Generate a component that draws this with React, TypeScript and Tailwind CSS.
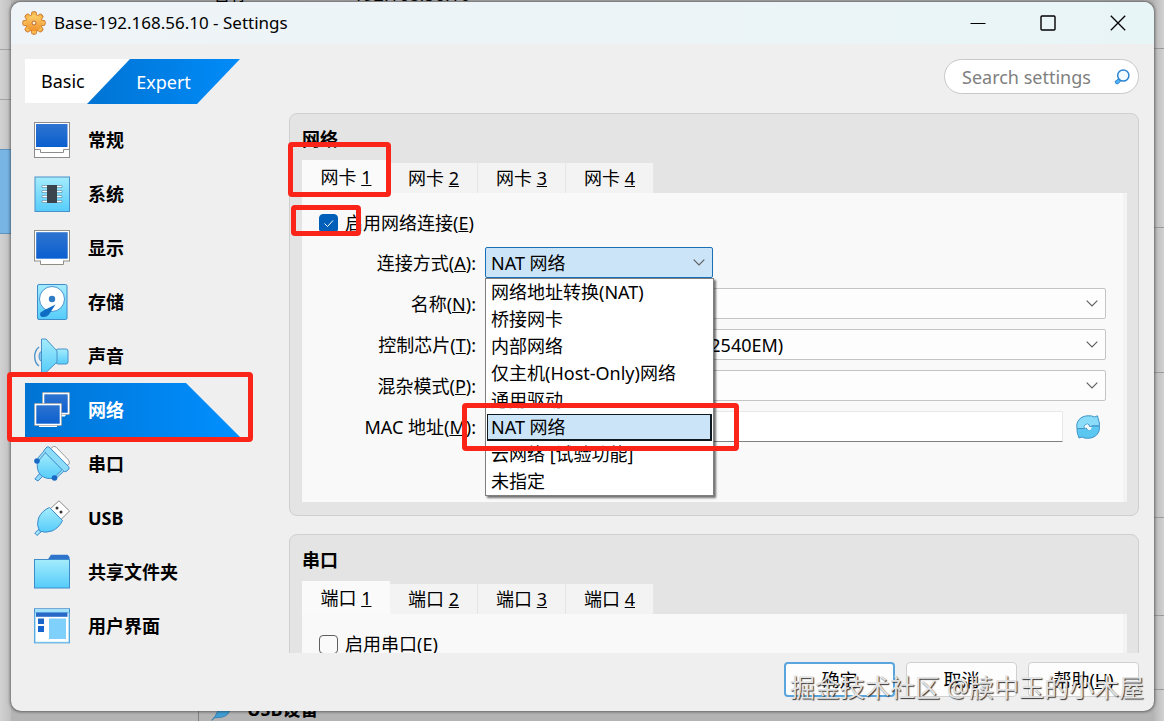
import { useState, type ReactNode } from "react";

function GearIcon() {
  const angles = [0, 45, 90, 135];
  return (
    <svg viewBox="0 0 24 24" className="size-6" aria-hidden="true">
      <defs>
        <linearGradient id="gear" x1="0" y1="0" x2="0" y2="1">
          <stop offset="0" stopColor="#fbd06a" />
          <stop offset="1" stopColor="#f0912c" />
        </linearGradient>
      </defs>
      <g fill="#c8722a" stroke="#c8722a" strokeWidth="1.4" strokeLinejoin="round">
        {angles.map((a) => (
          <rect key={a} x="9.8" y="1" width="4.4" height="22" rx="1.4" transform={`rotate(${a} 12 12)`} />
        ))}
        <circle cx="12" cy="12" r="8" />
      </g>
      <g fill="url(#gear)">
        {angles.map((a) => (
          <rect key={a} x="9.8" y="1.2" width="4.4" height="21.6" rx="1.4" fill="#f8b94f" transform={`rotate(${a} 12 12)`} />
        ))}
        <circle cx="12" cy="12" r="8" />
      </g>
      <circle cx="12" cy="12" r="2" fill="#fff3dc" stroke="#b9682c" strokeWidth="1" />
    </svg>
  );
}

function NavSvg({ children }: { children: ReactNode }) {
  return (
    <svg viewBox="0 0 36 36" className="size-9 shrink-0" aria-hidden="true">
      {children}
    </svg>
  );
}

const GeneralIcon = (
  <NavSvg>
    <rect x="0.5" y="0.5" width="35" height="35" fill="#fff" stroke="#8c8c8c" />
    <rect x="2" y="2" width="31.5" height="23" fill="url(#screen)" />
    <path d="M0.5 27.5H6.5V30.5H29.5V27.5H35.5" fill="none" stroke="#8c8c8c" />
  </NavSvg>
);

const SystemIcon = (
  <NavSvg>
    <rect x="1" y="1" width="34.5" height="34.5" fill="url(#sky)" stroke="#4a90c8" />
    <g stroke="#5f93ad" strokeWidth="3" strokeLinecap="round">
      <path d="M9 10.5H27M9 15.5H27M9 20.5H27M9 25.5H27" />
    </g>
    <g stroke="#fff" strokeWidth="1.6" strokeLinecap="round">
      <path d="M9 10.5H27M9 15.5H27M9 20.5H27M9 25.5H27" />
    </g>
    <rect x="13" y="9" width="10" height="18" fill="#3b444c" />
  </NavSvg>
);

const DisplayIcon = (
  <NavSvg>
    <path d="M6.5 30V34.5H29.5V30" fill="#fff" stroke="#8f8f88" />
    <rect x="0.5" y="0.5" width="35" height="30.5" fill="#fff" stroke="#8f8f88" />
    <rect x="2.2" y="2.2" width="31.5" height="26.5" fill="url(#screen)" />
    <rect x="7" y="30" width="22" height="3" fill="#fff" />
  </NavSvg>
);

const StorageIcon = (
  <NavSvg>
    <rect x="3.5" y="0.5" width="29.5" height="35" rx="1.5" fill="url(#sky)" stroke="#3f8ccb" />
    <circle cx="18" cy="15" r="12.5" fill="#fff" stroke="#4a94cf" />
    <circle cx="18" cy="15" r="3.2" fill="#2f7cc4" />
    <path d="M21.5 20.5L15 30.5Q12.5 33.5 8 33Q5 31.5 6.5 28.5L10.5 26Z" fill="#0f6cc4" />
  </NavSvg>
);

const SoundIcon = (
  <NavSvg>
    <path d="M5 9C-1 14 -0.500 24 5 28" fill="none" stroke="#4b92c8" strokeWidth="1.3" />
    <path d="M8 12.500C4 15 4 22 8 24" fill="#7fc6ef" stroke="#4b92c8" />
    <rect x="22" y="11" width="12" height="15" rx="2" fill="url(#sky)" stroke="#4b92c8" />
    <path d="M7.500 1H12L23 13V24L11.500 35H7.500Z" fill="url(#sky)" stroke="#4b92c8" strokeLinejoin="round" />
  </NavSvg>
);

const NetworkIcon = (
  <NavSvg>
    <path d="M20 22V24H31V22" fill="#fff" stroke="#fff" />
    <rect x="9.500" y="1.500" width="25" height="20" fill="url(#screen)" stroke="#8d8d8d" strokeWidth="2.600" />
    <rect x="9.500" y="1.500" width="25" height="20" fill="url(#screen)" stroke="#fff" strokeWidth="1.600" />
    <rect x="5" y="32" width="18" height="3" fill="#fff" />
    <rect x="1.500" y="12.500" width="25" height="20" fill="url(#screen)" stroke="#8d8d8d" strokeWidth="2.600" />
    <rect x="1.500" y="12.500" width="25" height="20" fill="url(#screen)" stroke="#fff" strokeWidth="1.600" />
  </NavSvg>
);

const SerialIcon = (
  <NavSvg>
    <path d="M16.500 2.500L19.500 0.500Q21 0 22.500 1.500L34.500 14Q36 16 35 18L32.500 20Z" fill="#fff" stroke="#999" />
    <path d="M0.800 33L6 27L9 30L4 35Z" fill="#8ed8fa" stroke="#3f8ccb" />
    <path d="M4 14L11 6L30 25L21 32Q12 34 6.500 29Q1.500 23 4 14Z" fill="url(#sky)" stroke="#3f8ccb" />
    <path d="M10.500 3.500L13 1Q14.500 0.300 16 1.800L34.500 20.500Q36 22.500 34 24L32 25.500Q30.500 26 29.500 25L10.500 6Q9.500 5 10.500 3.500Z" fill="#8ddcf9" stroke="#3f8ccb" />
    <path d="M4.500 13L11 5.500M22 31L29 24.500" stroke="#4b92c8" strokeWidth="3" />
    <path d="M4.500 13L11 5.500M22 31L29 24.500" stroke="#9fe2fb" strokeWidth="1.200" />
    <circle cx="3" cy="15" r="2.800" fill="#1769c4" />
    <circle cx="20.500" cy="32" r="2.800" fill="#1769c4" />
  </NavSvg>
);

const UsbIcon = (
  <NavSvg>
    <path d="M16.500 8.500L25 0.800L35.500 11L27 19.500Z" fill="#fff" stroke="#8a8a8a" strokeLinejoin="round" />
    <circle cx="23" cy="8" r="1.500" fill="#333" />
    <circle cx="27" cy="12" r="1.500" fill="#333" />
    <path d="M0.800 33L5 29L7.500 31.500L3 35.500Z" fill="#9fe0fa" stroke="#3f8ccb" />
    <path d="M15.500 7.500L28.500 20.500Q25 28 18 31Q11 33.500 5.500 31Q2 25 4.500 18Q8 10.500 15.500 7.500Z" fill="url(#sky)" stroke="#3f8ccb" />
  </NavSvg>
);

const FolderIcon = (
  <NavSvg>
    <path d="M13.500 6L17 0.800H33.500L35.500 3V10H13.500Z" fill="#2e74cc" />
    <rect x="0.500" y="5.500" width="35" height="28.500" fill="url(#sky)" stroke="#3f8ccb" />
  </NavSvg>
);

const InterfaceIcon = (
  <NavSvg>
    <rect x="0.500" y="0.800" width="35" height="34" fill="#fff" stroke="#3f8ccb" />
    <rect x="1" y="1.300" width="34" height="3.400" fill="#9fe2fa" />
    <rect x="1" y="4.700" width="34" height="29.600" fill="none" stroke="#72c6f2" strokeWidth="1" />
    <rect x="2" y="4.500" width="31.500" height="4.300" fill="#2869c8" />
    <rect x="4" y="10.500" width="6" height="5.500" fill="#1c66c8" />
    <rect x="4" y="18" width="6" height="6" fill="#1465cf" />
    <rect x="15" y="10.500" width="17" height="20.500" fill="#7fd0fb" />
  </NavSvg>
);

const navItems = [
  { label: "常规", icon: GeneralIcon },
  { label: "系统", icon: SystemIcon },
  { label: "显示", icon: DisplayIcon },
  { label: "存储", icon: StorageIcon },
  { label: "声音", icon: SoundIcon },
  { label: "网络", icon: NetworkIcon },
  { label: "串口", icon: SerialIcon },
  { label: "USB", icon: UsbIcon },
  { label: "共享文件夹", icon: FolderIcon },
  { label: "用户界面", icon: InterfaceIcon },
];

const attachModes = [
  "网络地址转换(NAT)",
  "桥接网卡",
  "内部网络",
  "仅主机(Host-Only)网络",
  "通用驱动",
  "NAT 网络",
  "云网络 [试验功能]",
  "未指定",
];

function Marker({ className }: { className: string }) {
  return (
    <span
      aria-hidden="true"
      className={`pointer-events-none absolute z-30 rounded-[4px] border-[5px] border-[#fb2418] ${className}`}
    />
  );
}

function SharedGradients() {
  return (
    <svg className="absolute size-0" aria-hidden="true">
      <defs>
        <linearGradient id="screen" x1="0" y1="0" x2="0" y2="1">
          <stop offset="0" stopColor="#2f74d0" />
          <stop offset="1" stopColor="#0a5fcf" />
        </linearGradient>
        <linearGradient id="sky" x1="0" y1="0" x2="0" y2="1">
          <stop offset="0" stopColor="#a5ecfc" />
          <stop offset="1" stopColor="#55ccfa" />
        </linearGradient>
      </defs>
    </svg>
  );
}

function TabStrip({ label, marked }: { label: string; marked?: boolean }) {
  return (
    <div role="tablist" className="flex items-end">
      {[1, 2, 3, 4].map((n) => (
        <button
          key={n}
          type="button"
          role="tab"
          aria-selected={n === 1}
          className={
            n === 1
              ? "relative h-[33px] w-[88px] bg-[#fafafa]"
              : "h-[30px] w-[88px] border-r border-[#e6e6e6] bg-[#f3f3f3]"
          }
        >
          {label} <u>{n}</u>
          {n === 1 && marked && <Marker className="-top-[18px] -bottom-1 -left-[14px] w-[103px]" />}
        </button>
      ))}
    </div>
  );
}

function Panel({ title, children }: { title: string; children: ReactNode }) {
  return (
    <section className="rounded-lg border border-[#cfcfcf] bg-[#e4e4e4] pr-[11px] pb-[13px] pl-3">
      <h2 className="h-[46px] pt-3 text-lg/[26px] font-bold">{title}</h2>
      {children}
    </section>
  );
}

function Chevron() {
  return (
    <svg viewBox="0 0 12 7" className="pointer-events-none absolute right-2 h-[7px] w-3" aria-hidden="true">
      <path d="M0.700 0.700L6 6L11.300 0.700" fill="none" stroke="#5c5c5c" strokeWidth="1.100" />
    </svg>
  );
}

function Mnemonic({ id, text, letter }: { id: string; text: string; letter: string }) {
  return (
    <label htmlFor={id} className="text-right whitespace-nowrap">
      {text}(<u>{letter}</u>):
    </label>
  );
}

function ComboBox({ id, options }: { id: string; options: string[] }) {
  return (
    <div className="relative flex items-center">
      <select
        id={id}
        className="h-[31px] w-full appearance-none rounded-[2px] border border-[#c4c4c4] bg-[#fdfdfd] pl-[5px]"
      >
        {options.map((o) => (
          <option key={o}>{o}</option>
        ))}
      </select>
      <Chevron />
    </div>
  );
}

function AttachCombo() {
  const [mode, setMode] = useState("NAT 网络");
  return (
    <div className="relative z-20 flex w-[228px] items-center">
      <select
        id="attach"
        value={mode}
        onChange={(e) => setMode(e.target.value)}
        className="h-[31px] w-full appearance-none rounded-[2px] border border-[#1a6fb5] bg-[#cce4f7] pl-[5px]"
      >
        {attachModes.map((m) => (
          <option key={m}>{m}</option>
        ))}
      </select>
      <Chevron />
      <ul
        role="listbox"
        aria-label="连接方式"
        className="absolute top-full left-0 w-[229px] border border-[#7f7f7f] bg-white shadow-[2px_2px_2px_rgba(0,0,0,0.55)]"
      >
        {attachModes.map((m) => (
          <li
            key={m}
            role="option"
            aria-selected={m === mode}
            onClick={() => setMode(m)}
            className={
              m === mode
                ? "relative mr-px ml-px h-[27px] border-2 border-t border-l border-[#101820] bg-[#cce4f7] pl-[3px] leading-6"
                : "h-[27px] pl-[5px] leading-[27px]"
            }
          >
            {m}
            {m === mode && <Marker className="-top-3 -right-[29px] -bottom-3 -left-[26px]" />}
          </li>
        ))}
      </ul>
    </div>
  );
}

function RefreshIcon() {
  return (
    <svg viewBox="0 0 24 24" className="size-6" aria-hidden="true">
      <path
        d="M1 13.500C-0.500 6 5 0.800 12 0.800Q16 0.500 18.500 2L21.500 0.800L22.500 5Q24 8 23.300 11H16L14 12Q13.500 9.500 11.500 9Q9 9 8 11.500L9 13.500Z"
        fill="#8bdcf8"
        stroke="#3f93c8"
      />
      <path
        d="M23.300 11C24.500 18 19 23.500 12 23.200Q8.500 23.500 6 22L3 23L1.500 18.500Q1 16 1 13.500H9L10 12.500Q10.500 14.800 12.500 15Q15 14.500 16 11Z"
        fill="#5cc8f2"
        stroke="#3f93c8"
      />
      <path d="M8.500 13L9.500 10L11.500 9.200L13 12H16L14.500 15L12 15L11 12.500Z" fill="#f1fbff" />
    </svg>
  );
}

function Backdrop() {
  return (
    <div aria-hidden="true" className="absolute inset-0 overflow-hidden bg-[#b4b4b4]">
      <div className="flex h-full justify-between">
        <div className="flex w-[11px] flex-col bg-linear-to-r from-[#d2d2d2] to-[#c0c0c0]">
          <div className="h-[50px] border-b border-[#a2a2a2]" />
          <div className="h-[50px] border-b border-[#a2a2a2]" />
          <div className="h-[50px] border-b border-[#5e93bd]" />
          <div className="h-[84px] border-b border-[#5e93bd] bg-[#78b4e4]" />
        </div>
        <div className="flex w-[10px] flex-col bg-linear-to-r from-[#b8b8b8] to-[#d2d2d2]">
          <div className="h-[49px] border-b border-[#999]" />
          <div className="h-[179px] border-b border-[#999]" />
          <div className="h-[145px] border-b border-[#999]" />
          <div className="h-[145px] border-b border-[#999]" />
          <div className="h-[98px] border-b border-[#999]" />
          <div className="h-[74px] border-b border-[#999]" />
        </div>
      </div>
      <div className="absolute -top-[18px] left-[212px] flex gap-[105px] leading-6">
        <span>名称</span>
        <span>192.168.56.10</span>
      </div>
      <div className="absolute -bottom-[2px] left-[198px] flex h-7 items-center gap-3 border-l border-[#808080] pl-3 font-bold">
        <span className="size-6">
          <svg viewBox="0 0 36 36" className="size-6">
            <path d="M1 35L6 29L16 10L28 21Q24 32 6 31Z" fill="#3f9fd4" stroke="#2c6fa3" />
          </svg>
        </span>
        <span>USB设备</span>
      </div>
    </div>
  );
}

export default function App() {
  const [active, setActive] = useState("网络");
  return (
    <div className="relative flex h-screen overflow-hidden pt-[2px] pr-[10px] pb-[10px] pl-[11px] font-['Noto_Sans','Noto_Sans_CJK_SC',sans-serif] text-lg/6 text-black">
      <Backdrop />
      <SharedGradients />
      <div className="relative flex min-w-0 flex-1 flex-col rounded-[10px] bg-[#efefef] shadow-[0_0_3px_1px_rgba(0,0,0,0.45)]">
        <header className="flex h-[42px] shrink-0 items-center rounded-t-[10px] bg-linear-to-r from-[#eef4f8] via-[#edf4f7] to-[#e8f5f7] pr-7 pl-[11px]">
          <GearIcon />
          <h1 className="ml-2 flex-1 text-[17px]/6">Base-192.168.56.10 - Settings</h1>
          <div className="flex gap-[54px]">
            <button type="button" aria-label="最小化">
              <svg viewBox="0 0 16 16" className="size-4"><path d="M0.500 8.500H15.500" stroke="#000" /></svg>
            </button>
            <button type="button" aria-label="最大化">
              <svg viewBox="0 0 16 16" className="size-4"><rect x="1" y="1" width="14" height="14" rx="1" fill="none" stroke="#000" strokeWidth="1.400" /></svg>
            </button>
            <button type="button" aria-label="关闭">
              <svg viewBox="0 0 16 16" className="size-4"><path d="M0.800 0.800L15.200 15.200M15.200 0.800L0.800 15.200" stroke="#000" strokeWidth="1.300" /></svg>
            </button>
          </div>
        </header>

        <div className="flex shrink-0 items-start justify-between pt-[15px] pr-[15px] pl-[14px]">
          <div className="flex h-11">
            <button type="button" className="h-11 w-[105px] bg-white pl-4 text-left">
              Basic
            </button>
            <button
              type="button"
              className="-ml-[43px] h-[45px] w-[153px] bg-linear-to-r from-[#0074d4] to-[#008bf8] text-white [clip-path:polygon(43px_0,100%_0,calc(100%-43px)_100%,0_100%)]"
            >
              Expert
            </button>
          </div>
          <div className="flex h-[35px] w-[195px] items-center rounded-full border border-[#c8c8c8] bg-white pr-2 pl-[17px]">
            <input
              type="search"
              aria-label="Search settings"
              placeholder="Search settings"
              className="min-w-0 flex-1 bg-transparent outline-none placeholder:text-[#808080]"
            />
            <svg viewBox="0 0 16 16" className="size-4 shrink-0" aria-hidden="true">
              <path d="M1 12.500L5 9.500L7 11.500L4 14.800Q1.500 15.500 1 12.500Z" fill="#54b4f5" stroke="#2b83d2" />
              <circle cx="9.300" cy="6.500" r="5.600" fill="#f2fbff" stroke="#2b83d2" strokeWidth="1.500" />
            </svg>
          </div>
        </div>

        <div className="mt-[10px] flex min-h-0 flex-1 pl-[14px]">
          <nav aria-label="设置" className="w-[215px] shrink-0">
            {navItems.map((item) => (
              <div key={item.label} className="relative">
                <button
                  type="button"
                  onClick={() => setActive(item.label)}
                  className={
                    item.label === active
                      ? "flex h-[54px] w-full items-center gap-[18px] bg-linear-to-r from-[#0074d4] to-[#008fff] pl-[9px] font-bold text-white [clip-path:polygon(0_0,calc(100%-54px)_0,100%_100%,0_100%)]"
                      : "flex h-[54px] w-full items-center gap-[18px] pl-[9px] font-bold"
                  }
                >
                  {item.icon}
                  {item.label}
                </button>
                {item.label === "网络" && <Marker className="-top-[11px] -right-[13px] -bottom-[5px] -left-[18px]" />}
              </div>
            ))}
          </nav>

          <main className="flex min-w-0 flex-1 flex-col gap-[18px] overflow-hidden pr-[15px] pl-[49px]">
            <Panel title="网络">
              <TabStrip label="网卡" marked />
              <div className="border-r-4 border-[#f3f3f3] bg-[#f9f9f9] pt-[18px] pr-[17px] pb-[60px] pl-[17px]">
                <div className="relative flex h-6 w-fit items-center gap-[7px]">
                  <span className="relative flex">
                    <input
                      id="enable-net"
                      type="checkbox"
                      defaultChecked
                      className="size-[19px] appearance-none rounded-[4px] border border-[#5f5f5f] bg-[#fafafa] checked:border-[#005fb8] checked:bg-[#005fb8]"
                    />
                    <svg viewBox="0 0 19 19" className="pointer-events-none absolute size-[19px]" aria-hidden="true">
                      <path d="M5.500 9.500L8.500 12.500L14 6.500" fill="none" stroke="#fff" />
                    </svg>
                  </span>
                  <label htmlFor="enable-net">
                    启用网络连接(<u>E</u>)
                  </label>
                  <Marker className="-top-[6px] -bottom-[1px] -left-7 w-[70px]" />
                </div>
                <div className="mt-3 grid grid-cols-[157px_minmax(0,1fr)] items-center gap-x-[9px] gap-y-[10px]">
                  <Mnemonic id="attach" text="连接方式" letter="A" />
                  <AttachCombo />
                  <Mnemonic id="name" text="名称" letter="N" />
                  <ComboBox id="name" options={[""]} />
                  <Mnemonic id="chip" text="控制芯片" letter="T" />
                  <ComboBox id="chip" options={["Intel PRO/1000 MT 桌面 (82540EM)"]} />
                  <Mnemonic id="promisc" text="混杂模式" letter="P" />
                  <ComboBox id="promisc" options={[""]} />
                  <Mnemonic id="mac" text="MAC 地址" letter="M" />
                  <div className="flex items-center gap-[13px] pr-[6px]">
                    <input
                      id="mac"
                      type="text"
                      className="h-[31px] min-w-0 flex-1 border border-[#e8e8e8] border-b-[#808080] bg-white px-[5px]"
                    />
                    <button type="button" aria-label="刷新 MAC 地址">
                      <RefreshIcon />
                    </button>
                  </div>
                </div>
              </div>
            </Panel>

            <Panel title="串口">
              <TabStrip label="端口" />
              <div className="border-r-4 border-[#f3f3f3] bg-[#f9f9f9] pt-[18px] pb-[60px] pl-[17px]">
                <div className="flex h-6 items-center gap-[7px]">
                  <input
                    id="enable-serial"
                    type="checkbox"
                    className="size-[19px] appearance-none rounded-[4px] border border-[#5f5f5f] bg-[#fafafa]"
                  />
                  <label htmlFor="enable-serial">启用串口(E)</label>
                </div>
              </div>
            </Panel>
          </main>
        </div>

        <footer className="flex shrink-0 justify-end gap-[11px] pt-[9px] pr-[15px] pb-[14px]">
          <button type="button" className="h-[35px] w-[111px] rounded-[4px] border-2 border-[#5aa5dd] bg-[#fdfdfd]">
            确定
          </button>
          <button type="button" className="h-[35px] w-[111px] rounded-[4px] border border-[#d0d0d0] bg-[#fdfdfd]">
            取消
          </button>
          <button type="button" className="h-[35px] w-[111px] rounded-[4px] border border-[#d0d0d0] bg-[#fdfdfd]">
            帮助(<u>H</u>)
          </button>
        </footer>
      </div>
      <p className="pointer-events-none absolute right-5 bottom-[18px] z-40 text-[25px]/8 whitespace-nowrap text-[#e2e2e2] [text-shadow:1px_1px_1px_#333]">
        掘金技术社区 @牍中玉的小木屋
      </p>
    </div>
  );
}
